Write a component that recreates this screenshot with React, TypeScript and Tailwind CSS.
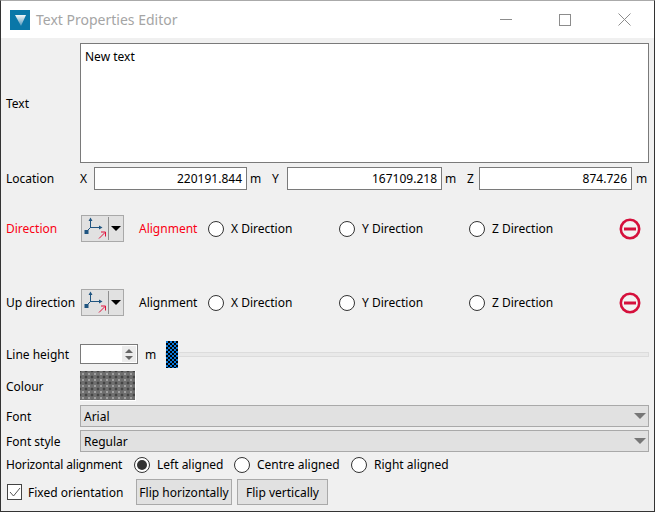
const ui = { fontFamily: '"Noto Sans", sans-serif' }

function AxisIcon() {
  return (
    <svg width="26" height="25" viewBox="0 0 26 25" fill="none">
      <path d="M8.500 12V3M8.500 11.500H18M8.500 11.500L4 16" stroke="#1f5480" />
      <path d="M6.500 5l2-3.500L10.500 5zM17 9.500l3.500 2L17 13.500z" fill="#1f5480" />
      <rect x="2.500" y="14" width="4" height="4" fill="#1f5480" />
      <path d="M17 22.500l6-6M19 16h4.500v4.500" stroke="#e0103a" />
    </svg>
  )
}

function DirectionPicker() {
  return (
    <div className="flex h-[27px] w-[43px] items-center border border-[#a9a9a9] bg-[#e1e1e1]">
      <div className="flex h-full w-[26px] items-center justify-center">
        <AxisIcon />
      </div>
      <div className="h-[23px] w-[1px] bg-[#8f8f8f]" />
      <div className="ml-[2px] h-0 w-0 border-x-[5px] border-t-[5px] border-x-transparent border-t-black" />
    </div>
  )
}

function Radio({ checked = false }: { checked?: boolean }) {
  return (
    <span className="flex h-[16px] w-[16px] items-center justify-center rounded-full border border-[#333] bg-white">
      {checked && <span className="h-[10px] w-[10px] rounded-full bg-[#333]" />}
    </span>
  )
}

function RadioLabel({ label, checked, className = '' }: { label: string; checked?: boolean; className?: string }) {
  return (
    <div className={`flex items-center gap-[7px] ${className}`}>
      <Radio checked={checked} />
      <span>{label}</span>
    </div>
  )
}

function RemoveIcon() {
  return (
    <svg width="22" height="22" viewBox="0 0 22 22" fill="none">
      <circle cx="11" cy="11" r="9.200" stroke="#d5103c" strokeWidth="2.600" fill="#f2f2f2" />
      <rect x="5" y="9.500" width="12" height="3" fill="#d5103c" />
    </svg>
  )
}

function DirectionRow({ label, red = false, className = '' }: { label: string; red?: boolean; className?: string }) {
  return (
    <div className={`flex h-[27px] items-center ${className}`}>
      <span className={`w-[75px] ${red ? 'text-[#fa0014]' : ''}`}>{label}</span>
      <DirectionPicker />
      <span className={`ml-[15px] w-[69px] ${red ? 'text-[#fa0014]' : ''}`}>Alignment</span>
      <RadioLabel label="X Direction" className="w-[131px]" />
      <RadioLabel label="Y Direction" className="w-[130px]" />
      <RadioLabel label="Z Direction" className="w-[150px]" />
      <RemoveIcon />
    </div>
  )
}

function CoordField({ value, className = '' }: { value: string; className?: string }) {
  return (
    <div className={`flex h-[23px] items-center justify-end border border-[#7a7a7a] bg-white pr-[4px] ${className}`}>
      {value}
    </div>
  )
}

function Combo({ value }: { value: string }) {
  return (
    <div className="flex h-[22px] flex-1 items-center justify-between border border-[#a9a9a9] bg-[#e1e1e1] pl-[3px] pr-[2px]">
      <span className="translate-y-[1px]">{value}</span>
      <span className="h-0 w-0 border-x-[6px] border-t-[6px] border-x-transparent border-t-[#777]" />
    </div>
  )
}

export default function App() {
  return (
    <div className="flex h-[512px] w-[655px] flex-col overflow-hidden border-x border-b border-t border-x-[#333] border-b-[#333] border-t-[#aaa] bg-[#f0f0f0] text-[12px] leading-[16px] text-black" style={ui}>
      {/* Title bar */}
      <div className="flex h-[37px] shrink-0 items-center bg-white pl-[9px]">
        <svg width="20" height="20" viewBox="0 0 20 20">
          <defs>
            <linearGradient id="logoFade" x1="0" y1="0" x2="0" y2="1">
              <stop offset="0" stopColor="#f4f7f9" />
              <stop offset="1" stopColor="#4d97bc" />
            </linearGradient>
          </defs>
          <rect width="20" height="20" fill="#0a77a8" />
          <path d="M5 5h11l-5 11z" fill="url(#logoFade)" />
        </svg>
        <span className="ml-[6px] text-[14px] text-[#a5a5a5]">Text Properties Editor</span>
        <div className="ml-auto flex items-center pr-[23px]">
          <div className="h-[1px] w-[12px] bg-[#8c8c8c]" />
          <div className="ml-[47px] h-[12px] w-[12px] border border-[#8c8c8c]" />
          <svg className="ml-[47px]" width="13" height="13" viewBox="0 0 13 13" fill="none">
            <path d="M0.500 0.500l12 12M12.500 0.500l-12 12" stroke="#8c8c8c" />
          </svg>
        </div>
      </div>

      <div className="flex flex-1 flex-col pl-[5px] pr-[5px] pt-[5px]">
        <div className="flex items-center">
          <span className="w-[74px] translate-y-[1px]">Text</span>
          <div className="h-[120px] flex-1 border border-[#7a7a7a] bg-white px-[4px] py-[5px]">New text</div>
        </div>

        <div className="mt-[4px] flex h-[23px] items-center">
          <span className="w-[74px]">Location</span>
          <span className="w-[14px]">X</span>
          <CoordField value="220191.844" className="w-[153px]" />
          <span className="ml-[3px] w-[22px]">m</span>
          <span className="w-[15px]">Y</span>
          <CoordField value="167109.218" className="w-[155px]" />
          <span className="ml-[3px] w-[22px]">m</span>
          <span className="w-[12px]">Z</span>
          <CoordField value="874.726" className="w-[153px]" />
          <span className="ml-[4px]">m</span>
        </div>

        <DirectionRow label="Direction" red className="mt-[25px]" />
        <DirectionRow label="Up direction" className="mt-[47px]" />

        <div className="mt-[28px] flex h-[20px] items-center">
          <span className="w-[74px] translate-y-[1px]">Line height</span>
          <div className="flex h-[20px] w-[58px] items-center justify-end border border-[#7a7a7a] bg-white pr-[1px]">
            <div className="flex h-[16px] w-[14px] flex-col items-center justify-center gap-[3px] bg-[#ececec]">
              <span className="h-0 w-0 border-x-[4px] border-b-[4px] border-x-transparent border-b-[#666]" />
              <span className="h-0 w-0 border-x-[4px] border-t-[4px] border-x-transparent border-t-[#666]" />
            </div>
          </div>
          <span className="ml-[7px] translate-y-[1px]">m</span>
          <div className="relative ml-[9px] h-[5px] flex-1 border border-[#dcdcdc] bg-[#e9e9e9]">
            <div className="absolute left-0 top-[-12px] h-[27px] w-[12px] [background:repeating-conic-gradient(#000_0_25%,#0a78d7_0_50%)_0_0/4px_4px]" />
          </div>
        </div>

        <div className="mt-[7px] flex h-[30px] items-center">
          <span className="w-[74px] translate-y-[1px]">Colour</span>
          <div className="h-[30px] w-[56px] border-r border-b border-white bg-[#6f6f6f] [background-image:radial-gradient(#a0a0a0_1px,transparent_1.500px),radial-gradient(#444_1.200px,transparent_1.700px)] [background-position:0_0,3px_3px] [background-size:6px_6px]" />
        </div>

        <div className="mt-[4px] flex items-center">
          <span className="w-[74px] translate-y-[1px]">Font</span>
          <Combo value="Arial" />
        </div>
        <div className="mt-[3px] flex items-center">
          <span className="w-[74px] translate-y-[1px]">Font style</span>
          <Combo value="Regular" />
        </div>

        <div className="mt-[4px] flex h-[18px] items-center">
          <span className="w-[128px] tracking-[-0.15px]">Horizontal alignment</span>
          <RadioLabel label="Left aligned" checked className="w-[100px]" />
          <RadioLabel label="Centre aligned" className="w-[117px]" />
          <RadioLabel label="Right aligned" />
        </div>

        <div className="mt-[5px] flex h-[26px] items-center">
          <span className="ml-[1px] flex h-[16px] w-[15px] items-center justify-center border border-[#444] bg-white">
            <svg width="12" height="12" viewBox="0 0 12 12" fill="none">
              <path d="M1 6l3.500 4L11 2" stroke="#555" />
            </svg>
          </span>
          <span className="ml-[6px] w-[108px] translate-y-[1px]">Fixed orientation</span>
          <div className="flex h-[26px] w-[96px] items-center justify-center border border-[#a9a9a9] bg-[#e1e1e1] pt-[1px]">Flip horizontally</div>
          <div className="ml-[5px] flex h-[26px] w-[91px] items-center justify-center border border-[#a9a9a9] bg-[#e1e1e1] pt-[1px]">Flip vertically</div>
        </div>
      </div>
    </div>
  )
}
